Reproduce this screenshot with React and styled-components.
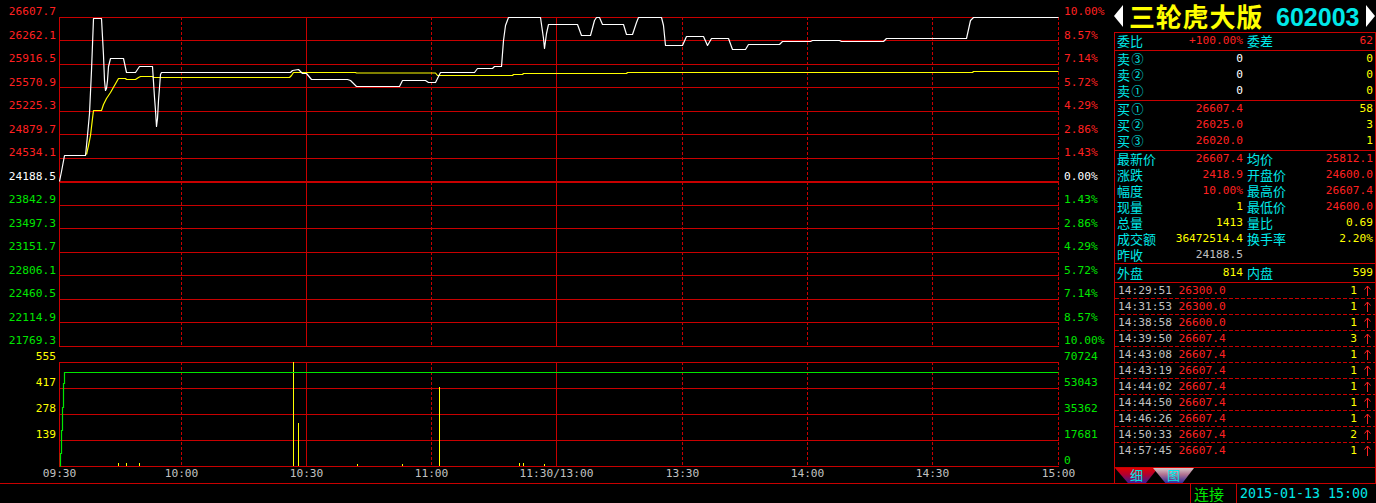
import React from 'react';
import styled, { createGlobalStyle } from 'styled-components';

// terminal colours
const C = {
  grid: '#c80000',
  red: '#ff2020',
  green: '#00e600',
  white: '#ffffff',
  grey: '#c0c0c0',
  yellow: '#ffff00',
  cyan: '#00e8e8',
};

const MONO = '"DejaVu Sans Mono", "Liberation Mono", monospace';
const CJK = '"Noto Sans CJK SC", "Noto Sans", sans-serif';

const GlobalStyle = createGlobalStyle`
  html, body {
    margin: 0;
    padding: 0;
    background: #000;
  }
  body {
    width: 1376px;
    height: 503px;
    overflow: hidden;
    font-family: ${MONO};
  }
`;

// ---- data ----
const V_LINES = [59, 181, 306, 431, 556, 682, 807, 932, 1058];
const SOLID = [0, 2, 4];
const TIMES = ['09:30', '10:00', '10:30', '11:00', '11:30/13:00', '13:30', '14:00', '14:30', '15:00'];
const P_ROWS = Array.from({ length: 15 }, (_, i) => Math.floor(17 + i * 23.5));
const V_ROWS = [362, 388, 414, 440, 466];

const priceLabels = [
  '26607.7', '26262.1', '25916.5', '25570.9', '25225.3', '24879.7', '24534.1',
  '24188.5',
  '23842.9', '23497.3', '23151.7', '22806.1', '22460.5', '22114.9', '21769.3',
];
const pctLabels = [
  '10.00%', '8.57%', '7.14%', '5.72%', '4.29%', '2.86%', '1.43%',
  '0.00%',
  '1.43%', '2.86%', '4.29%', '5.72%', '7.14%', '8.57%', '10.00%',
];
const sideColor = (i) => (i < 7 ? C.red : i === 7 ? C.white : C.green);

const whiteLine = [
  [59, 181], [61, 171], [62.5, 163], [64, 155], [85, 155], [87, 135], [89, 113], [91, 70],
  [93, 18], [101, 18], [103, 55], [104, 80], [105, 90], [106, 88], [107, 80], [108, 66],
  [110, 58], [123, 58], [126, 72], [135, 72], [139, 66], [152, 66], [154, 97], [155, 110],
  [156, 126], [157, 118], [158, 100], [160, 74], [161, 72], [290, 72], [292, 70], [298, 69],
  [302, 73], [306, 73], [311, 79], [347, 79], [350, 80], [356, 86], [399, 86], [402, 80],
  [425, 80], [428, 82], [435, 82], [440, 72], [474, 72], [477, 68], [492, 68], [494, 66],
  [501, 66], [503, 40], [505, 25], [508, 17], [540, 17], [543, 38], [544, 48], [546, 33],
  [548, 24], [577, 24], [581, 35], [590, 35], [594, 20], [596, 17], [599, 17], [602, 24],
  [623, 24], [626, 34], [632, 34], [636, 22], [638, 17], [661, 17], [663, 25], [665, 45],
  [682, 45], [686, 36], [703, 36], [707, 45], [711, 38], [728, 38], [732, 49], [745, 49],
  [748, 44], [779, 44], [782, 41], [810, 41], [812, 40], [839, 40], [841, 41], [883, 41],
  [886, 38], [966, 38], [970, 20], [973, 17], [1058, 17],
];

const yellowLine = [
  [86, 154], [88, 145], [90, 135], [92, 118], [93, 110], [101, 110], [103, 104], [106, 98],
  [110, 92], [114, 85], [118, 78], [125, 78], [126, 79], [135, 79], [138, 77], [140, 76],
  [152, 76], [153, 77], [289, 77], [291, 75], [293, 72], [355, 72], [356, 72.5], [435, 72.5],
  [437, 75], [512, 75], [513, 74], [522, 74], [523, 73], [626, 73], [627, 72], [972, 72],
  [973, 71], [1058, 71],
];

const greenLine = [
  [60, 466], [60, 453], [61, 453], [61, 430], [62, 430], [62, 407], [63, 407], [63, 383],
  [64, 383], [64, 372], [1058, 372],
];

const volBars = [
  [118, 463], [126, 463], [139, 463], [293, 362], [298, 423], [357, 464], [402, 464],
  [439, 387], [519, 463], [523, 463], [544, 464],
];

const pts = (list) => list.map((p) => p.join(',')).join(' ');

// time axis cells centred on the vertical grid lines
const timeCols = (() => {
  let edge = 0;
  return V_LINES.map((x) => {
    const next = 2 * (x + 0.5) - edge;
    const w = next - edge;
    edge = next;
    return `${w}px`;
  }).join(' ');
})();

const quoteRows = [
  [['最新价', '26607.4', C.red], ['均价', '25812.1', C.red]],
  [['涨跌', '2418.9', C.red], ['开盘价', '24600.0', C.red]],
  [['幅度', '10.00%', C.red], ['最高价', '26607.4', C.red]],
  [['现量', '1', C.yellow], ['最低价', '24600.0', C.red]],
  [['总量', '1413', C.yellow], ['量比', '0.69', C.yellow]],
  [['成交额', '36472514.4', C.yellow], ['换手率', '2.20%', C.yellow]],
  [['昨收', '24188.5', C.grey]],
];

const asks = [['③', '0', '0'], ['②', '0', '0'], ['①', '0', '0']];
const bids = [['①', '26607.4', '58'], ['②', '26025.0', '3'], ['③', '26020.0', '1']];

const ticks = [
  ['14:29:51', '26300.0', '1'],
  ['14:31:53', '26300.0', '1'],
  ['14:38:58', '26600.0', '1'],
  ['14:39:50', '26607.4', '3'],
  ['14:43:08', '26607.4', '1'],
  ['14:43:19', '26607.4', '1'],
  ['14:44:02', '26607.4', '1'],
  ['14:44:50', '26607.4', '1'],
  ['14:46:26', '26607.4', '1'],
  ['14:50:33', '26607.4', '2'],
  ['14:57:45', '26607.4', '1'],
];

// ---- layout ----
const Screen = styled.div`
  width: 1376px;
  height: 503px;
  background: #000;
  display: flex;
  flex-direction: column;
  overflow: hidden;
`;

const Main = styled.div`
  display: flex;
  height: 483px;
`;

const Chart = styled.div`
  width: 1114px;
  display: grid;
  grid-template-columns: 59px 1001px 54px;
  grid-template-rows: 350px 117px 16px;
`;

const Axis = styled.div`
  display: grid;
  grid-template-rows: ${(p) => p.$rows};
  font: 11.2px/10px ${MONO};
`;

const AxisLabel = styled.div`
  display: flex;
  align-items: flex-end;
  justify-content: ${(p) => (p.$side === 'left' ? 'flex-end' : 'flex-start')};
  padding: ${(p) => (p.$side === 'left' ? '0 3px 0 0' : '0 0 0 4px')};
  color: ${(p) => p.$color};
  white-space: nowrap;
`;

const Plot = styled.svg`
  display: block;
`;

const TimeAxis = styled.div`
  grid-column: 1 / -1;
  display: grid;
  grid-template-columns: ${(p) => p.$cols};
  font: 11.2px/12px ${MONO};
  color: ${C.grey};
  padding-top: 1px;
`;

const TimeLabel = styled.div`
  text-align: center;
  white-space: nowrap;
`;

// ---- side panel ----
const Side = styled.div`
  width: 262px;
  display: flex;
  flex-direction: column;
`;

const Header = styled.div`
  height: 32px;
  display: flex;
  align-items: center;
`;

const Arrow = styled.svg`
  display: block;
  flex: none;
  margin: ${(p) => (p.$right ? '0 1px 0 auto' : '0')};
`;

const Title = styled.span`
  margin-left: 6px;
  font: 700 26px/30px ${CJK};
  letter-spacing: 0.8px;
  color: ${C.yellow};
`;

const Code = styled.span`
  margin-left: 13px;
  font: 700 25px/28px "Liberation Sans", Arial, sans-serif;
  color: ${C.cyan};
  padding-top: 2px;
`;

const Box = styled.div`
  flex: 1;
  display: flex;
  flex-direction: column;
  border: 1px solid ${C.grid};
  border-bottom: none;
`;

const Section = styled.div`
  height: ${(p) => p.$h}px;
  flex: ${(p) => (p.$grow ? '1' : 'none')};
  border-bottom: 1px solid ${C.grid};
  box-sizing: content-box;
  display: flex;
  flex-direction: column;
  padding-top: ${(p) => p.$pt || 0}px;
`;

const Row = styled.div`
  height: 16px;
  display: grid;
  grid-template-columns: 126px 1fr;
  column-gap: 4px;
  padding: 0 2px;
  line-height: 16px;
`;

const Cell = styled.div`
  display: flex;
  justify-content: space-between;
  align-items: center;
  white-space: nowrap;
`;

const Label = styled.span`
  display: flex;
  align-items: center;
  font: 13px/16px ${CJK};
  color: ${C.cyan};
`;

const Circ = styled.span`
  display: inline-block;
  width: 13px;
  margin-left: 1px;
  text-align: center;
  font: 12px/16px ${CJK};
`;

const Value = styled.span`
  font: 11.2px/16px ${MONO};
  color: ${(p) => p.$color};
`;

const TickRow = styled.div`
  height: 16px;
  box-sizing: border-box;
  display: flex;
  align-items: center;
  padding: 0 2px 1px 3px;
  font: 11.2px/15px ${MONO};
  background-image: linear-gradient(to right, ${C.grid} 4px, transparent 4px);
  background-size: 6px 1px;
  background-position: left bottom;
  background-repeat: repeat-x;
  &:last-child {
    background: none;
  }
`;

const TickTime = styled.span`
  color: ${C.grey};
`;

const TickPrice = styled.span`
  color: ${C.red};
  margin-left: 6.7px;
`;

const TickVol = styled.span`
  flex: 1;
  text-align: right;
  color: ${C.yellow};
`;

const TickArrow = styled.svg`
  display: block;
  flex: none;
  margin-left: 7px;
  margin-right: 2px;
`;

const Tabs = styled.div`
  height: 15px;
  display: flex;
`;

const Tab = styled.div`
  width: ${(p) => p.$w}px;
  margin-left: ${(p) => p.$ml}px;
  height: 15px;
  clip-path: polygon(0 0, 100% 0, 72% 100%, 30% 100%);
  background: ${(p) => p.$bg};
  font: 13px/14px ${CJK};
  color: ${C.cyan};
  text-align: center;
`;

const Status = styled.div`
  height: 19px;
  border-top: 1px solid ${C.grid};
  display: flex;
`;

const StatusSpacer = styled.div`
  flex: 1;
`;

const StatusCell = styled.div`
  width: ${(p) => p.$w}px;
  border-left: 1px solid ${C.grid};
  padding-left: 3px;
  box-sizing: border-box;
  color: ${(p) => p.$color};
  font: ${(p) => (p.$cjk ? `15px/19px ${CJK}` : `13.3px/19px ${MONO}`)};
  white-space: nowrap;
`;

// ---- chart drawing ----
function GridLines({ rows, top, bottom }) {
  return (
    <g shapeRendering="crispEdges" stroke={C.grid} strokeWidth="1">
      {rows.map((y) => (
        <line key={`h${y}`} x1={59} x2={1059} y1={y + 0.5} y2={y + 0.5} />
      ))}
      {V_LINES.map((x, i) => (
        <line
          key={`v${x}`}
          x1={x + 0.5}
          x2={x + 0.5}
          y1={top}
          y2={bottom}
          strokeDasharray={SOLID.includes(i) ? undefined : '3 2'}
        />
      ))}
    </g>
  );
}

function PriceChart() {
  return (
    <Plot width={1001} height={350} viewBox="59 0 1001 350">
      <GridLines rows={P_ROWS} top={17} bottom={347} />
      <rect x={59} y={181} width={1000} height={2} fill={C.grid} />
      <g transform="translate(0.5 0.5)" fill="none" strokeWidth="1.2" strokeLinejoin="round">
        <polyline points={pts(yellowLine)} stroke={C.yellow} />
        <polyline points={pts(whiteLine)} stroke={C.white} />
      </g>
    </Plot>
  );
}

function VolumeChart() {
  return (
    <Plot width={1001} height={117} viewBox="59 350 1001 117">
      <GridLines rows={V_ROWS} top={362} bottom={467} />
      <g shapeRendering="crispEdges" stroke={C.yellow}>
        {volBars.map(([x, y]) => (
          <line key={x} x1={x + 0.5} x2={x + 0.5} y1={y} y2={466} />
        ))}
      </g>
      <polyline
        points={pts(greenLine)}
        transform="translate(0.5 0.5)"
        fill="none"
        stroke={C.green}
        strokeWidth="1.2"
      />
    </Plot>
  );
}

function SideArrow({ right }) {
  return (
    <Arrow $right={right} width="9" height="22" viewBox="0 0 9 22">
      <polygon points={right ? '0,0 9,11 0,22' : '9,0 0,11 9,22'} fill={C.white} />
    </Arrow>
  );
}

function UpArrow() {
  return (
    <TickArrow width="7" height="11" viewBox="0 0 7 11">
      <g stroke={C.red} strokeWidth="1" fill="none" shapeRendering="crispEdges">
        <line x1="3.5" y1="1" x2="3.5" y2="11" />
        <polyline points="0.5,4.5 3.5,1 6.5,4.5" shapeRendering="auto" />
      </g>
    </TickArrow>
  );
}

function QuoteCell({ item }) {
  if (!item) return <Cell />;
  const [label, value, color] = item;
  return (
    <Cell>
      <Label>{label}</Label>
      <Value $color={color}>{value}</Value>
    </Cell>
  );
}

function BookRow({ side, circ, price, priceColor, vol }) {
  return (
    <Row>
      <Cell>
        <Label>
          {side}
          <Circ>{circ}</Circ>
        </Label>
        <Value $color={priceColor}>{price}</Value>
      </Cell>
      <Cell>
        <span />
        <Value $color={C.yellow}>{vol}</Value>
      </Cell>
    </Row>
  );
}

export default function App() {
  return (
    <Screen>
      <GlobalStyle />
      <Main>
        <Chart>
          <Axis $rows="17px repeat(14, 23.5px)">
            {priceLabels.map((t, i) => (
              <AxisLabel key={i} $side="left" $color={sideColor(i)}>{t}</AxisLabel>
            ))}
          </Axis>
          <PriceChart />
          <Axis $rows="17px repeat(14, 23.5px)">
            {pctLabels.map((t, i) => (
              <AxisLabel key={i} $side="right" $color={sideColor(i)}>{t}</AxisLabel>
            ))}
          </Axis>

          <Axis $rows="12px repeat(4, 26px)">
            {['555', '417', '278', '139'].map((t) => (
              <AxisLabel key={t} $side="left" $color={C.yellow}>{t}</AxisLabel>
            ))}
          </Axis>
          <VolumeChart />
          <Axis $rows="12px repeat(4, 26px)">
            {['70724', '53043', '35362', '17681', '0'].map((t) => (
              <AxisLabel key={t} $side="right" $color={C.green}>{t}</AxisLabel>
            ))}
          </Axis>

          <TimeAxis $cols={timeCols}>
            {TIMES.map((t) => (
              <TimeLabel key={t}>{t}</TimeLabel>
            ))}
          </TimeAxis>
        </Chart>

        <Side>
          <Header>
            <SideArrow />
            <Title>三轮虎大版</Title>
            <Code>602003</Code>
            <SideArrow right />
          </Header>
          <Box>
            <Section $h={17}>
              <Row>
                <Cell>
                  <Label>委比</Label>
                  <Value $color={C.red}>+100.00%</Value>
                </Cell>
                <Cell>
                  <Label>委差</Label>
                  <Value $color={C.red}>62</Value>
                </Cell>
              </Row>
            </Section>
            <Section $h={49}>
              {asks.map(([c, p, v]) => (
                <BookRow key={c} side="卖" circ={c} price={p} priceColor={C.white} vol={v} />
              ))}
            </Section>
            <Section $h={49}>
              {bids.map(([c, p, v]) => (
                <BookRow key={c} side="买" circ={c} price={p} priceColor={C.red} vol={v} />
              ))}
            </Section>
            <Section $h={112}>
              {quoteRows.map((r, i) => (
                <Row key={i}>
                  <QuoteCell item={r[0]} />
                  <QuoteCell item={r[1]} />
                </Row>
              ))}
            </Section>
            <Section $h={17} $pt={1}>
              <Row>
                <Cell>
                  <Label>外盘</Label>
                  <Value $color={C.yellow}>814</Value>
                </Cell>
                <Cell>
                  <Label>内盘</Label>
                  <Value $color={C.yellow}>599</Value>
                </Cell>
              </Row>
            </Section>
            <Section $h={0} $grow>
              {ticks.map(([t, p, v]) => (
                <TickRow key={t}>
                  <TickTime>{t}</TickTime>
                  <TickPrice>{p}</TickPrice>
                  <TickVol>{v}</TickVol>
                  <UpArrow />
                </TickRow>
              ))}
            </Section>
            <Tabs>
              <Tab $w={43} $ml={0} $bg="linear-gradient(#e00000, #b00030 45%, #3a1a9a)">细</Tab>
              <Tab $w={41} $ml={-5} $bg="linear-gradient(#d8c8c8, #b07090 45%, #2a2aa0)">图</Tab>
            </Tabs>
          </Box>
        </Side>
      </Main>
      <Status>
        <StatusSpacer />
        <StatusCell $w={46} $color={C.green} $cjk>连接</StatusCell>
        <StatusCell $w={140} $color={C.cyan}>2015-01-13 15:00</StatusCell>
      </Status>
    </Screen>
  );
}
